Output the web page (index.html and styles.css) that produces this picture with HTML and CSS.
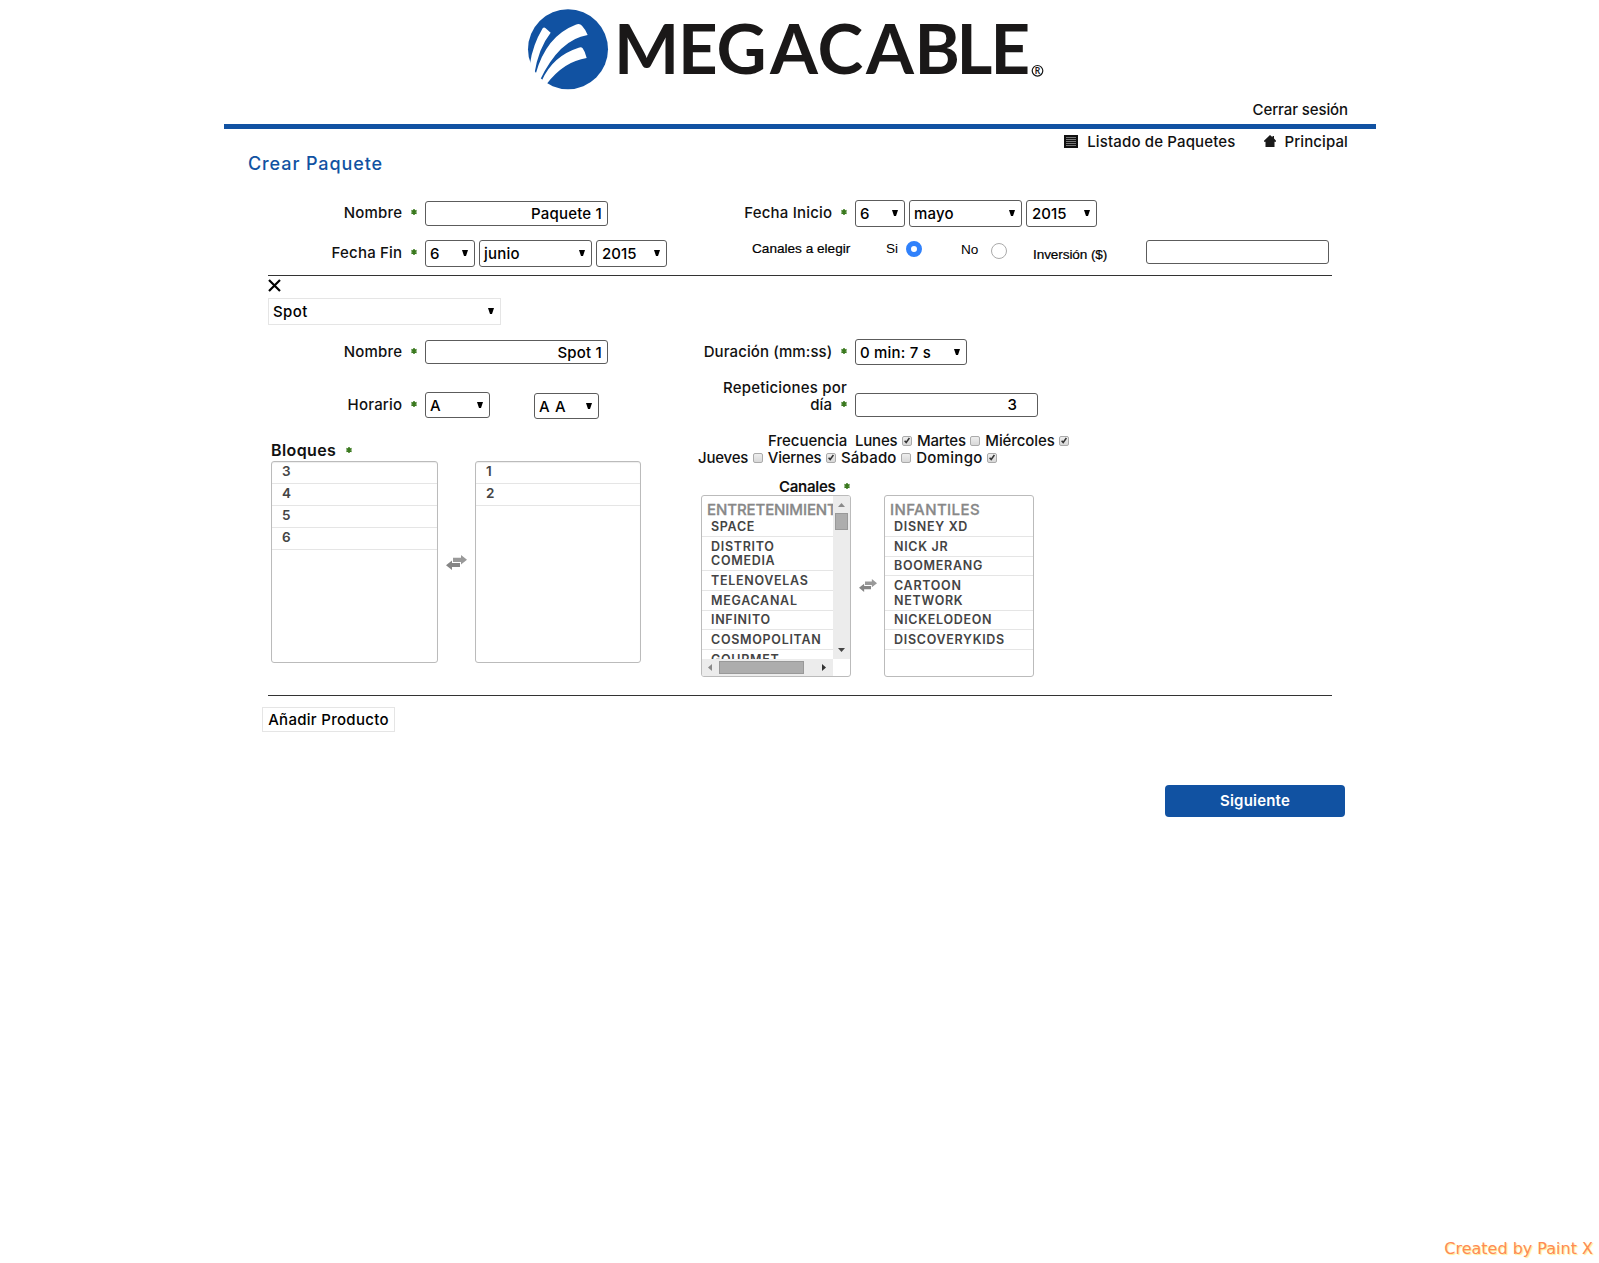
FILE: index.html
```html
<!DOCTYPE html>
<html lang="es">
<head>
<meta charset="utf-8">
<title>Megacable - Crear Paquete</title>
<link rel="stylesheet" href="styles.css">
</head>
<body>
<svg class="defs" width="0" height="0" aria-hidden="true">
  <symbol id="star" viewBox="0 0 6 6"><path d="M3 0v6M.4 1.5l5.2 3M5.6 1.5l-5.2 3" stroke="#39781d" stroke-width="1.5"/></symbol>
  <symbol id="caret" viewBox="0 0 6 6"><path d="M0 0h6L4 6H2z"/></symbol>
  <symbol id="swap" viewBox="0 0 21 15"><path d="M7 2.800h8V0l6 4.800L15 9.600V7H7z" fill="#999"/><path d="M14 8v4H6v3L0 10.200 6 5.400V8z" fill="#858585"/></symbol>
  <symbol id="check" viewBox="0 0 10 10"><path d="M2 4.600l2 2.200L8 1.200" fill="none" stroke="#333" stroke-width="1.900"/></symbol>
</svg>
<div class="page">
  <header class="header">
    <svg class="logo" width="520" height="84" viewBox="527 7 520 84" role="img" aria-label="Megacable">
      <circle cx="568" cy="49.300" r="40" fill="#1152a2"/>
      <g transform="translate(520 0) scale(.33333)" fill="#fff">
        <path d="M68 85Q72 80 77 85L92 98Q55 145 43 222L30 192Q38 135 68 85z"/>
        <path d="M167 74Q179 69 186 77Q195 86 203 105Q118 118 59 242L47 222Q78 108 167 74z"/>
        <path d="M176 143Q184 140 188 145Q196 156 200 174Q132 184 80 252L66 241Q98 168 176 143z"/>
      </g>
      <text class="wordmark" y="73.700" x="614 678 716.500 770 817.500 866 914.500 956.500 990.500">MEGACABLE</text>
      <circle cx="1037.500" cy="70.800" r="5.300" fill="none" stroke="#1a1818" stroke-width="1.200"/>
      <text class="reg" x="1037.600" y="74" text-anchor="middle">R</text>
    </svg>
    <a class="logout">Cerrar sesión</a>
  </header>
  <nav class="nav">
    <svg width="14" height="13" viewBox="0 0 14 13"><path d="M0 0h14v13H0z" fill="#111"/><path d="M2 2.500h10M2 4.500h10M2 6.500h10M2 8.500h10M2 10.500h10" stroke="#777"/></svg>
    <a class="nav-list">Listado de Paquetes</a>
    <svg width="12" height="12" viewBox="0 0 12 12"><path d="M6 0l2.500 2.200V1h1.500v2.500L12 5.800v1H10.500V12h-9V6.800H0v-1z" fill="#1a1a1a"/></svg>
    <a class="nav-home">Principal</a>
  </nav>
  <h1>Crear Paquete</h1>

  <main>
    <div class="row row-name">
      <label class="label">Nombre <svg class="star"><use href="#star"/></svg></label>
      <div><div class="input input-main">Paquete 1</div></div>
      <label class="label">Fecha Inicio <svg class="star"><use href="#star"/></svg></label>
      <div class="date">
        <div class="select day">6<svg class="caret"><use href="#caret"/></svg></div>
        <div class="select month">mayo<svg class="caret"><use href="#caret"/></svg></div>
        <div class="select year">2015<svg class="caret"><use href="#caret"/></svg></div>
      </div>
    </div>
    <div class="row row-end">
      <label class="label">Fecha Fin <svg class="star"><use href="#star"/></svg></label>
      <div class="date">
        <div class="select day">6<svg class="caret"><use href="#caret"/></svg></div>
        <div class="select month">junio<svg class="caret"><use href="#caret"/></svg></div>
        <div class="select year">2015<svg class="caret"><use href="#caret"/></svg></div>
      </div>
      <div class="choice">
        <span class="choice-title">Canales a elegir</span>
        <span class="choice-yes">Si</span><i class="radio radio-on"></i>
        <span class="choice-no">No</span><i class="radio radio-off"></i>
        <span class="invest">Inversión ($)</span>
        <div class="input"></div>
      </div>
    </div>
    <hr>
    <svg class="close" width="13" height="13" viewBox="0 0 13 13"><path d="M1 1l11 11M12 1L1 12" stroke="#000" stroke-width="2.200"/></svg>
    <div class="select type">Spot<svg class="caret"><use href="#caret"/></svg></div>

    <div class="row row-spot">
      <label class="label">Nombre <svg class="star"><use href="#star"/></svg></label>
      <div><div class="input">Spot 1</div></div>
      <label class="label label-snug">Duración (mm:ss) <svg class="star"><use href="#star"/></svg></label>
      <div class="select short duration">0 min: 7 s<svg class="caret"><use href="#caret"/></svg></div>
    </div>
    <div class="row row-time">
      <label class="label">Horario <svg class="star"><use href="#star"/></svg></label>
      <div class="slots">
        <div class="select short">A<svg class="caret"><use href="#caret"/></svg></div>
        <div class="select short second">A A<svg class="caret"><use href="#caret"/></svg></div>
      </div>
      <label class="label label-two"><span>Repeticiones por</span><br>día <svg class="star"><use href="#star"/></svg></label>
      <div><div class="input repeat">3</div></div>
    </div>

    <div class="columns">
      <section class="blocks">
        <h2>Bloques <svg class="star"><use href="#star"/></svg></h2>
        <div class="transfer">
          <ul class="list numbers first"><li>3</li><li>4</li><li>5</li><li>6</li></ul>
          <svg class="swap"><use href="#swap"/></svg>
          <ul class="list numbers"><li>1</li><li>2</li></ul>
        </div>
      </section>
      <section class="channels">
        <div class="days days-first">
          <span class="freq">Frecuencia</span>
          <span>Lunes</span><svg class="cb"><use href="#check"/></svg>
          <span>Martes</span><svg class="cb"></svg>
          <span class="wed">Miércoles</span><svg class="cb"><use href="#check"/></svg>
        </div>
        <div class="days days-second">
          <span>Jueves</span><svg class="cb"></svg>
          <span>Viernes</span><svg class="cb"><use href="#check"/></svg>
          <span class="sat">Sábado</span><svg class="cb"></svg>
          <span class="sun">Domingo</span><svg class="cb"><use href="#check"/></svg>
        </div>
        <h3>Canales <svg class="star"><use href="#star"/></svg></h3>
        <div class="transfer">
          <div class="list scroller">
            <div class="pane">
              <h4 class="tight">ENTRETENIMIENTO</h4>
              <ul><li>SPACE</li><li>DISTRITO COMEDIA</li><li>TELENOVELAS</li><li>MEGACANAL</li><li>INFINITO</li><li>COSMOPOLITAN</li><li>GOURMET</li></ul>
            </div>
            <div class="vbar">
              <svg width="7" height="4" viewBox="0 0 7 4"><path d="M0 4L3.500 0 7 4z" fill="#8a8a8a"/></svg>
              <i class="vthumb"></i>
              <svg class="down" width="7" height="4" viewBox="0 0 7 4"><path d="M0 0L3.500 4 7 0z" fill="#444"/></svg>
            </div>
            <div class="hbar">
              <svg width="4" height="7" viewBox="0 0 4 7"><path d="M4 0L0 3.500 4 7z" fill="#8a8a8a"/></svg>
              <i class="hthumb"></i>
              <svg width="4" height="7" viewBox="0 0 4 7"><path d="M0 0L4 3.500 0 7z" fill="#333"/></svg>
            </div>
          </div>
          <svg class="swap small" viewBox="0 0 21 15"><use href="#swap" width="21" height="15"/></svg>
          <div class="list">
            <h4>INFANTILES</h4>
            <ul><li>DISNEY XD</li><li>NICK JR</li><li>BOOMERANG</li><li>CARTOON<br>NETWORK</li><li>NICKELODEON</li><li>DISCOVERYKIDS</li></ul>
          </div>
        </div>
      </section>
    </div>
    <hr class="hr-bottom">
    <button class="add">Añadir Producto</button>
  </main>
  <div class="actions"><button class="next">Siguiente</button></div>
</div>
<footer class="credit">Created by Paint X</footer>
</body>
</html>
```
FILE: styles.css
```css
* { box-sizing: border-box; }
body {
  margin: 0;
  min-height: 1263px;
  display: flex;
  flex-direction: column;
  background: #fff;
  color: #111;
  font: 500 15px/20px Inter, sans-serif;
  letter-spacing: .2px;
}
h1, h2, h3, h4, ul { margin: 0; padding: 0; list-style: none; }
svg { display: block; flex: none; }
.defs { position: absolute; }
.page { width: 1152px; margin-left: 224px; }

.header { height: 129px; border-bottom: 5px solid #1152a2; padding: 7px 28px 0 0; }
.logo { margin-left: 303px; }
.wordmark { font: 700 69px Lato, sans-serif; letter-spacing: 0; fill: #1a1818; }
.reg { font: 700 8.500px Lato, sans-serif; letter-spacing: 0; fill: #1a1818; }
.logout { display: block; margin-top: 9px; text-align: right; letter-spacing: -.1px; }

.nav { display: flex; justify-content: flex-end; height: 20px; margin-top: 3px; padding-right: 28px; }
.nav svg { margin-top: 3px; }
.nav-list { margin: 0 28px 0 9px; letter-spacing: .15px; }
.nav-home { margin-left: 9px; letter-spacing: .1px; }
.nav svg + a { white-space: nowrap; }
h1 { padding-top: 1px; margin-left: 24px; height: 22px; font-size: 18px; line-height: 22px; font-weight: 500; letter-spacing: .9px; color: #1152a2; }

main { margin-left: 44px; width: 1064px; }
.row { display: grid; grid-template-columns: 157px 255px 175px 1fr; align-items: start; }
.row-name { margin-top: 26px; height: 27px; }
.row-end { margin-top: 13px; height: 27px; }
.row-spot { margin-top: 14px; height: 26px; }
.row-time { margin-top: 14px; height: 40px; }
.label { padding: 3px 8px 0 0; text-align: right; white-space: nowrap; }
.label-snug { letter-spacing: .1px; }
.star { display: inline-block; width: 6px; height: 6px; margin-left: 4.500px; vertical-align: 3px; }
.row-time .label { padding-top: 16px; }
.row-time .label-two { padding-top: 0; line-height: 17px; }

.input { width: 183px; height: 24px; padding-right: 5px; border: 1px solid #5c5c5c; border-radius: 3px; text-align: right; line-height: 23px; color: #000; }
.input-main { height: 25px; margin-top: 1px; }
.row-spot .input { margin-top: 1px; }
.repeat { margin-top: 14px; padding-right: 20px; }
.row-time .repeat { line-height: 22px; }
.select { display: flex; justify-content: space-between; height: 27px; padding: 0 6px 0 4px; border: 1px solid #5c5c5c; border-radius: 3px; line-height: 25px; color: #000; }
.caret { width: 6px; height: 6px; margin-top: 9px; }
.date { display: flex; gap: 4px; }
.day { width: 50px; }
.month { width: 113px; }
.year { width: 71px; padding-left: 5px; letter-spacing: 0; }
.short { height: 26px; width: 65px; }
.duration { width: 112px; letter-spacing: .2px; }
.slots { display: flex; gap: 44px; padding-top: 13px; }
.second { margin-top: 1px; letter-spacing: .7px; }
.type { width: 233px; margin-top: 6px; border-color: #e5e5e5; border-radius: 0; letter-spacing: .4px; }

.choice { grid-column: 3 / 5; display: flex; align-items: flex-start; padding-left: 72px; font: 13.600px/16px "Liberation Sans", sans-serif; letter-spacing: 0; color: #000; white-space: nowrap; }
.choice-title { width: 134px; padding-top: 1px; -webkit-text-stroke: .2px #000; }
.choice-yes { width: 20px; padding-top: 1px; }
.choice-no { width: 30px; margin-left: 39px; padding-top: 2px; }
.invest { width: 113px; margin-left: 26px; padding-top: 7px; letter-spacing: -.1px; -webkit-text-stroke: .2px #000; }
.radio { width: 16px; height: 16px; border-radius: 50%; margin-top: 1px; }
.radio-on { border: 5px solid #3081fb; }
.radio-off { border: 1px solid #aaa; margin-top: 3px; }

hr { height: 1px; margin: 8px 0 0; border: 0; background: #333; }
.close { margin-top: 3px; }

.columns { display: grid; grid-template-columns: 412px 1fr; align-items: start; margin-top: 13px; height: 245px; }
.blocks { padding: 8px 0 0 3px; }
h2 { height: 21px; font-size: 16px; font-weight: 600; letter-spacing: .4px; }
h2 .star { margin-left: 5.500px; }
.transfer { display: flex; align-items: flex-start; }
.list { width: 150px; height: 182px; border: 1px solid #bbb; border-radius: 3px; overflow: hidden; }
.numbers { width: 166px; height: 202px; font-weight: 600; font-size: 13.500px; line-height: 18px; color: #444; box-shadow: inset 0 1px 1px #eee; }
.numbers.first { width: 167px; }
.numbers li { height: 22px; padding-left: 10px; border-bottom: 1px solid #e5e5e5; }
.swap { width: 21px; height: 15px; margin: 94px 8px 0; }
.swap.small { width: 18px; height: 13px; margin: 84px 7px 0 8px; }

.days { display: flex; height: 17px; line-height: 17px; letter-spacing: -.2px; }
.days-first { padding-left: 88px; }
.days-second { padding-left: 18px; }
.freq { width: 87px; letter-spacing: 0; }
.cb { width: 10px; height: 10px; margin: 4px 5px 0 4.500px; border: 1px solid #aaa; border-radius: 2px; background: linear-gradient(#eee, #d8d8d8); overflow: visible; }
.wed { letter-spacing: -.1px; }
.sat { letter-spacing: .2px; }
.sun { letter-spacing: .3px; }
h3 { margin: 12px 0 0 99px; height: 17px; font-size: 15px; font-weight: 600; line-height: 17px; letter-spacing: -.3px; }
h3 .star { margin-left: 5.500px; }
.channels .transfer { padding-left: 21px; }
h4 { height: 21.300px; padding: 4.500px 0 0 5px; font-size: 15px; font-weight: 500; line-height: 17px; letter-spacing: .4px; color: #888; -webkit-text-stroke: .3px #888; }
.tight { letter-spacing: -.1px; }
.channels li { padding: 2.700px 0 1.300px 9px; border-bottom: 1px solid #e5e5e5; font-size: 12.500px; font-weight: 600; line-height: 14.700px; letter-spacing: .7px; color: #444; }
.scroller { display: grid; grid-template: 163px 17px / 131px 17px; }
.pane { overflow: hidden; }
.vbar { display: flex; flex-direction: column; align-items: center; padding: 7px 0; background: #ececec; }
.vthumb { width: 13px; height: 17px; margin-top: 6px; background: #adadad; border: 1px solid #999; }
.down { margin-top: auto; }
.hbar { display: flex; align-items: center; padding: 0 7px 0 6px; background: #ececec; }
.hthumb { width: 85px; height: 13px; margin: 0 18px 0 7px; background: #adadad; border: 1px solid #999; }

.hr-bottom { margin-top: 18px; }
button { display: block; font: inherit; letter-spacing: inherit; }
.add { width: 133px; height: 25px; margin: 11px 0 0 -6px; padding: 0; border: 1px solid #e5e5e5; background: #fff; color: #000; letter-spacing: .3px; }
.actions { display: flex; justify-content: flex-end; margin-top: 53px; padding-right: 31px; }
.next { width: 180px; height: 32px; border: 0; border-radius: 4px; background: #1152a2; color: #fff; font-weight: 600; }
.credit { margin-top: auto; padding: 0 6px 4px; text-align: right; font: 16px/20px "DejaVu Sans", sans-serif; letter-spacing: 0; color: #ff8a55; text-shadow: 1px 1px 1px #ffee88; }
```
